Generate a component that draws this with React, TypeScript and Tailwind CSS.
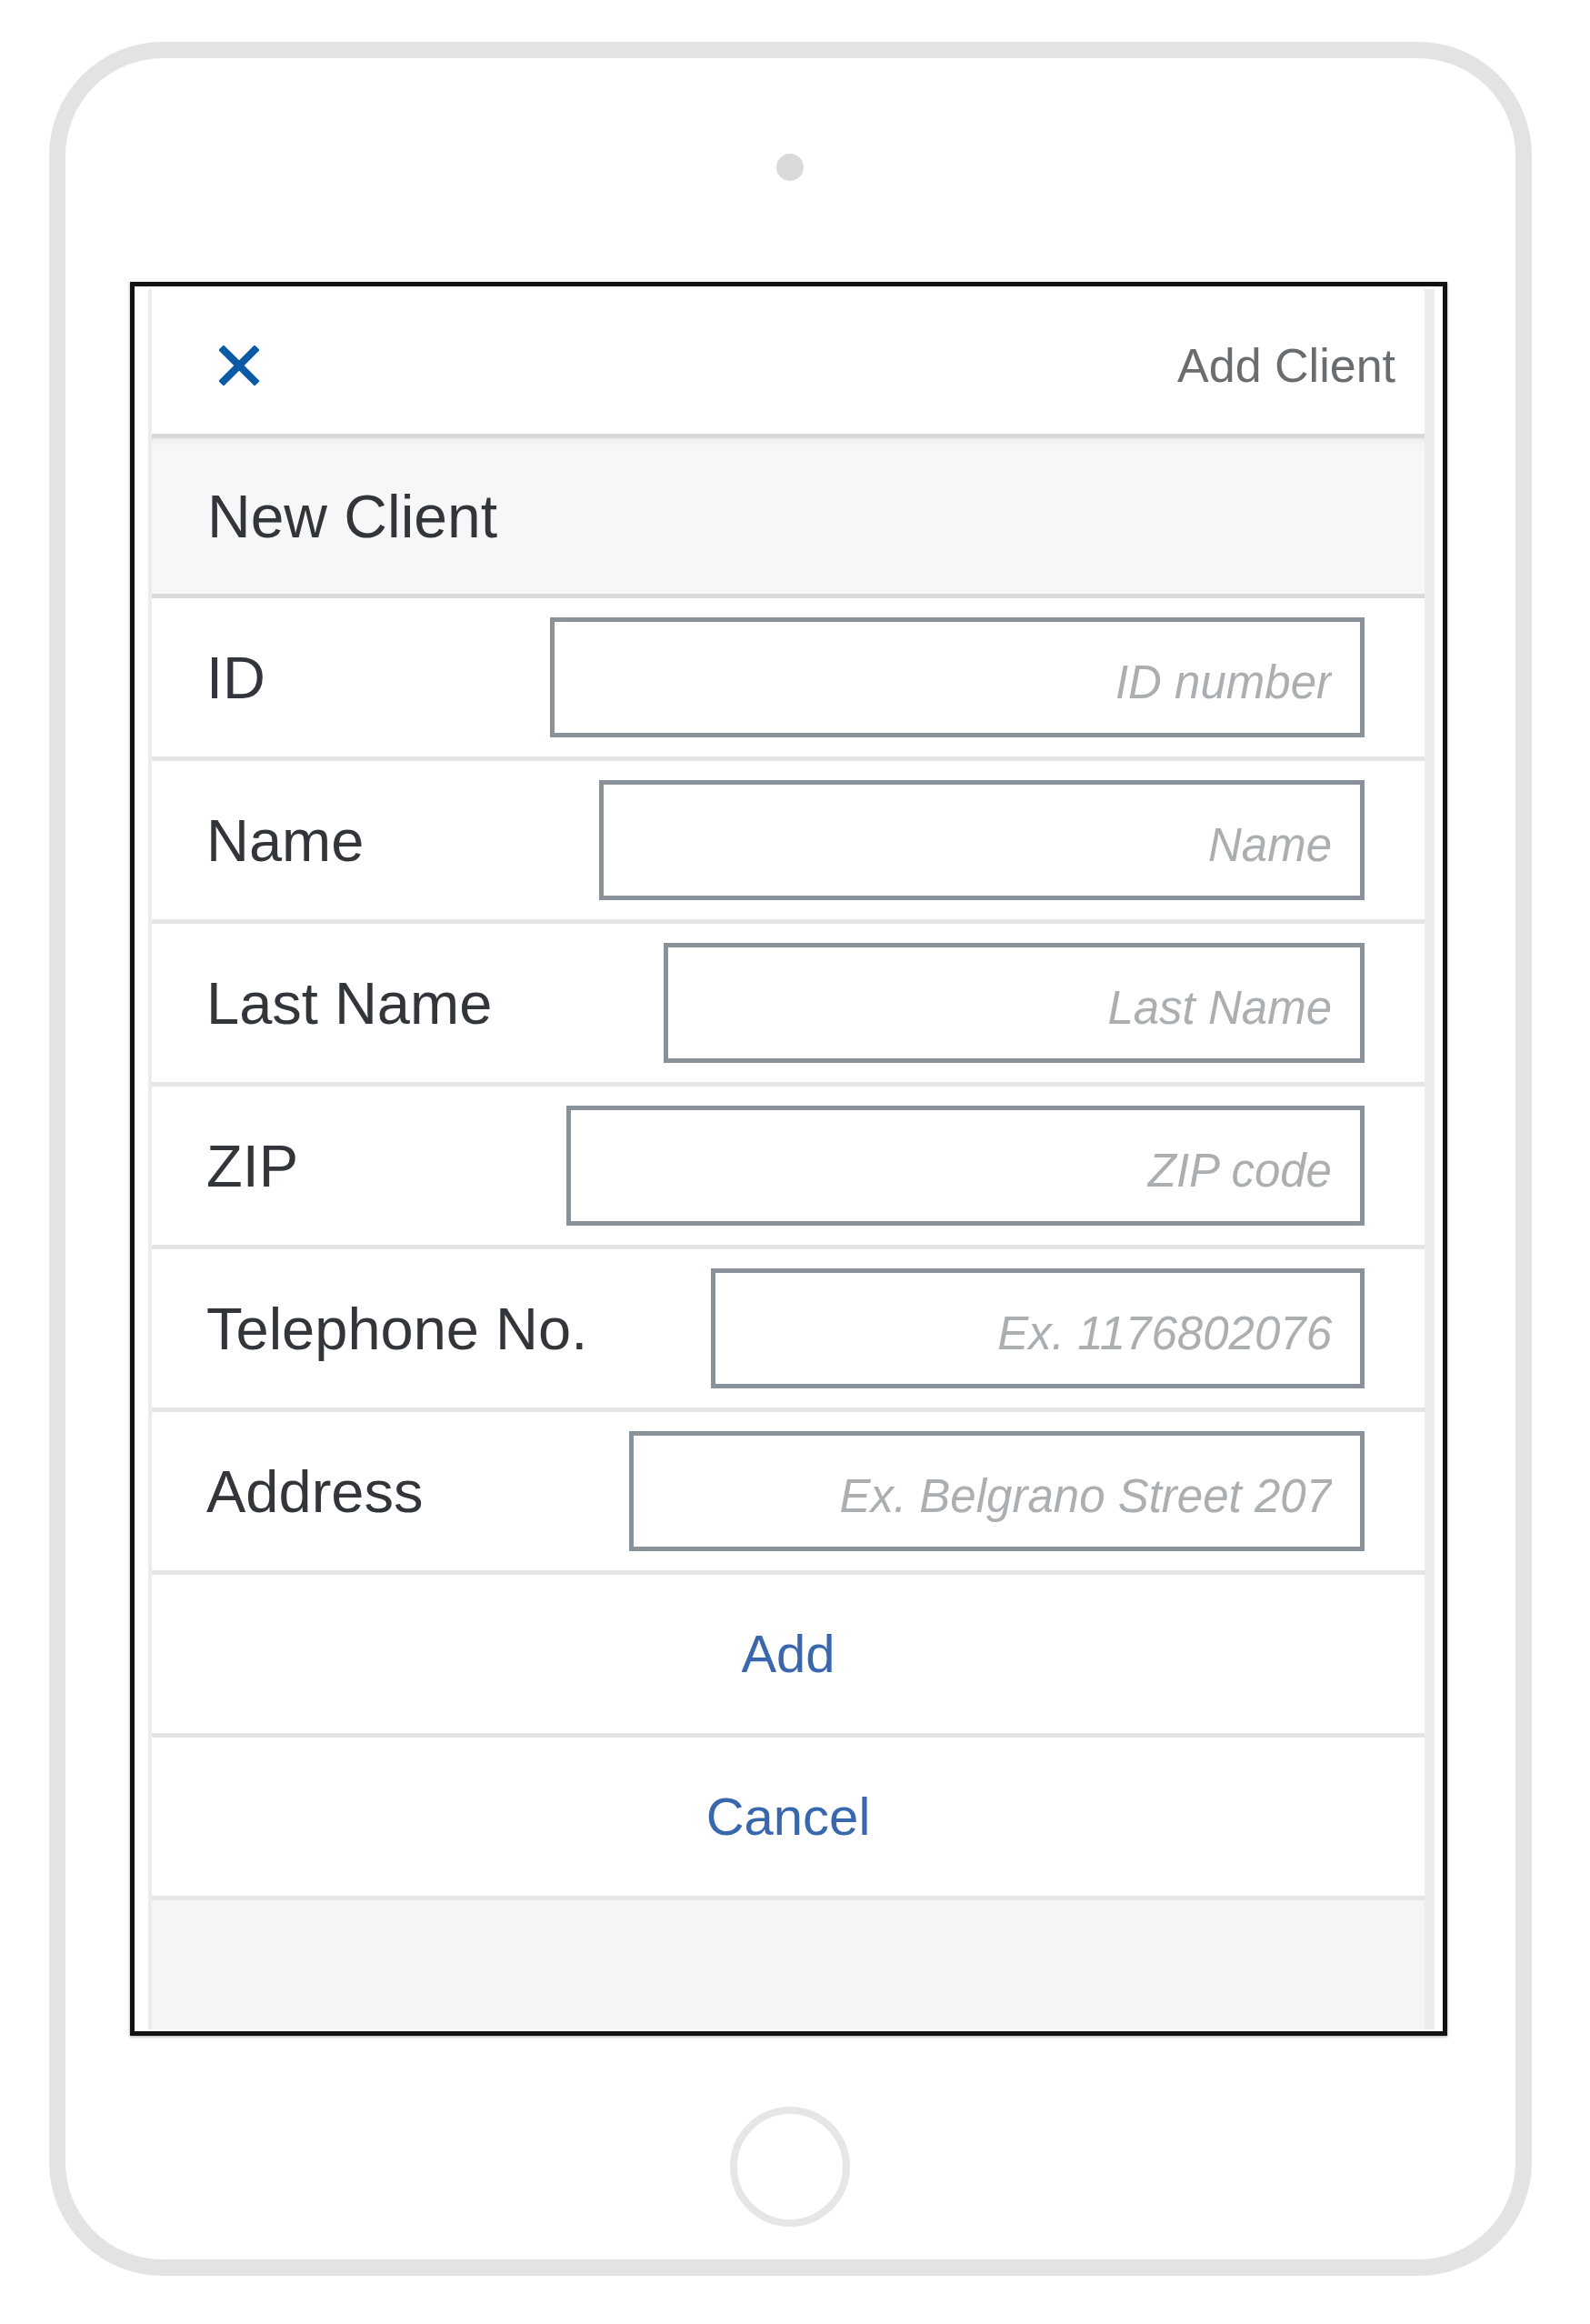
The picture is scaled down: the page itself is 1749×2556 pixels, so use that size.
const fields = [
  { label: "ID", placeholder: "ID number" },
  { label: "Name", placeholder: "Name" },
  { label: "Last Name", placeholder: "Last Name" },
  { label: "ZIP", placeholder: "ZIP code" },
  { label: "Telephone No.", placeholder: "Ex. 1176802076" },
  { label: "Address", placeholder: "Ex. Belgrano Street 207" },
];

function CloseIcon() {
  return (
    <svg width="44" height="44" viewBox="0 0 44 44" fill="none">
      <path d="M5 5 L39 39 M39 5 L5 39" stroke="#0b5aa6" strokeWidth="8" strokeLinecap="square" />
    </svg>
  );
}

export default function App() {
  return (
    <div className="min-h-screen bg-white pt-[46px] pl-[54px] font-['Liberation_Sans',Arial,sans-serif]">
      {/* tablet frame */}
      <div className="w-[1631px] h-[2457px] rounded-[125px] border-[18px] border-[#e2e3e4] bg-white flex flex-col">
        <div className="mt-[105px] ml-[782px] w-[30px] h-[30px] rounded-full bg-[#d9d9d9]" />

        {/* screen */}
        <div className="mt-[111px] ml-[71px] w-[1449px] h-[1929px] border-[5px] border-[#121212] bg-white pl-[15px] pr-[9px] pt-[3px] pb-[2px] shadow-[0_1px_3px_rgba(0,0,0,0.35)]">
          <div className="h-full flex flex-col border-l-4 border-r-[11px] border-[#ececec]">
            <div className="h-[164px] shrink-0 border-b-[5px] border-[#d9d9d9] flex items-center justify-between pl-[74px] pr-[32px] pt-[8px]">
              <CloseIcon />
              <span className="text-[52px] leading-none text-[#6a6d70]">Add Client</span>
            </div>

            <div className="h-[176px] shrink-0 bg-[#f7f7f7] border-b-[5px] border-[#d9d9d9] flex items-center pl-[61px] shadow-[inset_0_8px_8px_-6px_rgba(0,0,0,0.06)]">
              <span className="text-[66px] leading-none text-[#32363a]">New Client</span>
            </div>

            {fields.map((f) => (
              <div
                key={f.label}
                className="h-[179px] shrink-0 border-b-[5px] border-[#e5e5e5] flex items-center pl-[60px] pr-[66px]"
              >
                <label className="grow whitespace-nowrap text-[65px] leading-none text-[#32363a]">
                  {f.label}
                </label>
                <input
                  placeholder={f.placeholder}
                  className="grow basis-[583px] min-w-0 h-[132px] border-[5px] border-[#89919a] bg-white text-right pr-[31px] pt-[10px] text-[51px] italic text-[#32363a] placeholder:text-[#acafb2] outline-none"
                />
              </div>
            ))}

            <button className="h-[179px] shrink-0 border-b-[5px] border-[#e5e5e5] flex items-center justify-center text-[58px] leading-none text-[#3867ad]">
              Add
            </button>
            <button className="h-[179px] shrink-0 border-b-[5px] border-[#e5e5e5] flex items-center justify-center text-[58px] leading-none text-[#3867ad]">
              Cancel
            </button>

            <div className="flex-1 bg-[#f5f5f5]" />
          </div>
        </div>

        {/* home button */}
        <div className="mt-[78px] ml-[731px] w-[132px] h-[132px] rounded-full border-[8px] border-[#e6e6e6]" />
      </div>
    </div>
  );
}
